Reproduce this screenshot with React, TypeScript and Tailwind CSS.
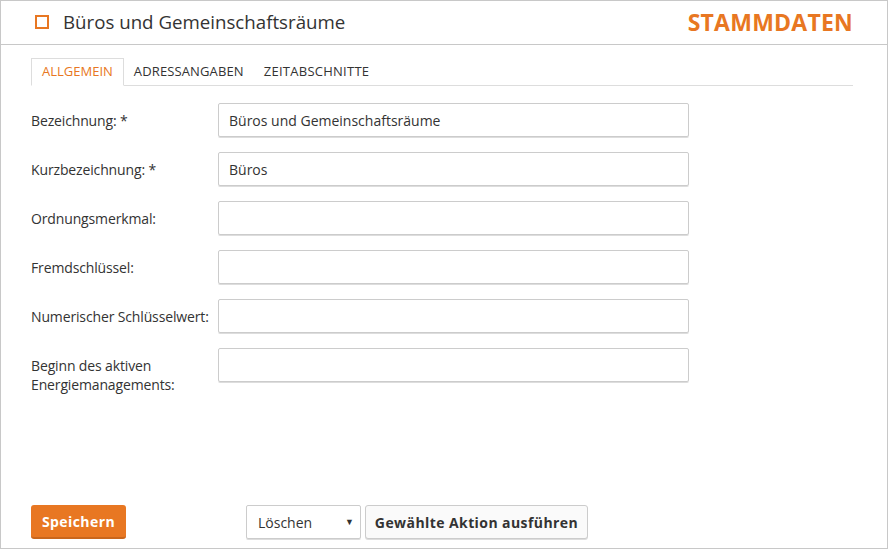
import React from 'react';

const FIELDS = [
  { label: 'Bezeichnung: *', value: 'Büros und Gemeinschaftsräume' },
  { label: 'Kurzbezeichnung: *', value: 'Büros' },
  { label: 'Ordnungsmerkmal:', value: '' },
  { label: 'Fremdschlüssel:', value: '' },
  { label: 'Numerischer Schlüsselwert:', value: '' },
  { label: 'Beginn des aktiven Energiemanagements:', value: '' },
];

export default function App() {
  return (
    <div
      className="w-[888px] h-[549px] bg-white border border-[#c8c8c8] flex flex-col text-[#333] overflow-hidden"
      style={{ fontFamily: '"Open Sans", "Noto Sans", sans-serif' }}
    >
      {/* Header */}
      <header className="h-[44px] shrink-0 border-b border-[#c8c8c8] flex items-center justify-between pl-[34px] pr-[34px]">
        <div className="flex items-center gap-[14px]">
          <div className="w-[14px] h-[14px] border-2 border-[#e87722]" />
          <h1 className="text-[18.7px] text-[#333] leading-none">Büros und Gemeinschaftsräume</h1>
        </div>
        <span className="text-[23px] font-bold text-[#e87722] tracking-[0.01em] leading-none">STAMMDATEN</span>
      </header>

      {/* Tabs */}
      <div className="mt-[13px] ml-[30px] mr-[34px] flex border-b border-[#ddd] h-[28px]">
        <div className="px-[10px] flex items-center border border-[#ddd] border-b-white -mb-px bg-white text-[13px] text-[#e87722]">
          ALLGEMEIN
        </div>
        <div className="px-[10px] flex items-center text-[13px] text-[#333] tracking-[0.01em]">ADRESSANGABEN</div>
        <div className="px-[10px] flex items-center text-[13px] text-[#333] tracking-[0.02em]">ZEITABSCHNITTE</div>
      </div>

      {/* Form */}
      <div className="mt-[17px] pl-[30px] flex flex-col gap-[15px]">
        {FIELDS.map((f) => (
          <div key={f.label} className="flex items-start h-[34px]">
            <label className="w-[187px] text-[14px] leading-[19px] pt-[8px] tracking-[-0.01em]">{f.label}</label>
            <div className="w-[471px] h-[34px] shrink-0 border border-[#ccc] rounded-[2px] shadow-[0_1px_0_#ddd] flex items-center px-[10px] text-[14px]">
              {f.value}
            </div>
          </div>
        ))}
      </div>

      {/* Footer actions */}
      <div className="mt-auto mb-[9px] pl-[30px] flex items-center">
        <button className="w-[95px] h-[34px] bg-[#e87722] rounded-[3px] border-b-2 border-[#c9661c] text-white font-bold text-[14px] tracking-[0.03em]">
          Speichern
        </button>
        <div className="ml-[120px] w-[115px] h-[34px] border border-[#ccc] rounded-[2px] shadow-[0_1px_0_#ddd] flex items-center justify-between pl-[11px] pr-[6px] text-[14px]">
          <span>Löschen</span>
          <span className="text-[9px] text-[#333]">▼</span>
        </div>
        <button className="ml-[4px] w-[223px] h-[34px] border border-[#ccc] rounded-[3px] bg-[#fafafa] shadow-[0_1px_0_#ddd] text-[14px] font-bold tracking-[0.03em] text-[#333]">
          Gewählte Aktion ausführen
        </button>
      </div>
    </div>
  );
}
